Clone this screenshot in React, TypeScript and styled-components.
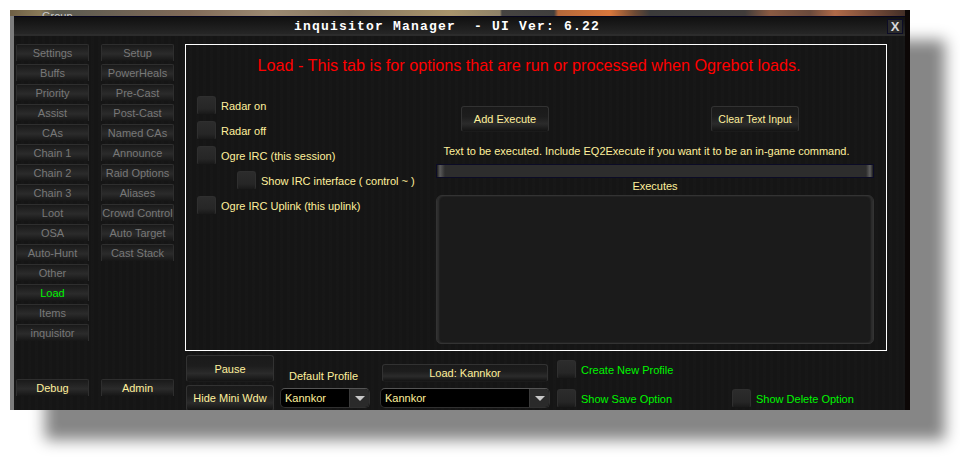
import React from 'react';
import styled, { createGlobalStyle } from 'styled-components';

const UI_FONT = '"Liberation Sans", Arial, sans-serif';
const YELLOW = '#fff09c';
const GREEN = '#00f500';

const GlobalStyle = createGlobalStyle`
    html, body {
        margin: 0;
        padding: 0;
        background: #ffffff;
    }
`;

const Page = styled.div`
    width: 960px;
    height: 460px;
    padding: 10px 0 0 10px;
    box-sizing: border-box;
    overflow: hidden;
    font-family: ${UI_FONT};
    font-size: 11px;
`;

const Window = styled.div`
    width: 900px;
    height: 400px;
    box-sizing: border-box;
    display: flex;
    flex-direction: column;
    overflow: hidden;
    background: #151515;
    box-shadow: 35px 30px 14px #868686;
    border-right: 5px solid #0c0706;
`;

const SceneStrip = styled.div`
    height: 6px;
    flex: none;
    margin-right: -5px;
    padding-left: 32px;
    overflow: hidden;
    color: #c8c8c8;
    font-size: 11px;
    line-height: 12px;
    background: linear-gradient(
        90deg,
        #6e5f45 0,
        #8a7a58 30px,
        #5a5a50 45px,
        #806a58 180px,
        #9c8a72 260px,
        #85755f 340px,
        #a8946c 440px,
        #8f8268 490px,
        #454341 492px,
        #3f3e3d 544px,
        #b5683a 548px,
        #d8773c 600px,
        #6d4a35 625px,
        #3a3a3a 640px,
        #403c3a 735px,
        #8a5a42 760px,
        #6a4a3c 800px,
        #b06a48 825px,
        #7a4d3a 860px,
        #3a2a24 900px
    );
`;

const Frame = styled.div`
    flex: 1;
    min-height: 0;
    display: flex;
    flex-direction: column;
    border-left: 4px solid #7d7d7d;
    box-shadow: inset 0 -3px 2px -1px #000000;
`;

const TitleBar = styled.div`
    height: 16px;
    flex: none;
    display: flex;
    align-items: center;
    justify-content: space-between;
    padding: 1px 2px 0 280px;
    border-top: 1px solid #05051e;
    border-bottom: 2px solid #2c2c2c;
    background: linear-gradient(180deg, #101010, #262626);
`;

const Title = styled.span`
    color: #ffffff;
    font-family: "Liberation Mono", monospace;
    font-weight: bold;
    font-size: 13px;
    letter-spacing: 1.2px;
    white-space: pre;
`;

const CloseButton = styled.span`
    width: 16px;
    height: 15px;
    display: flex;
    align-items: center;
    justify-content: center;
    color: #d8d8d8;
    font-family: "Liberation Sans", sans-serif;
    font-weight: bold;
    font-size: 13px;
    background: #2b2b2b;
    border: 1px solid #0c0c26;
    box-sizing: border-box;
`;

const Body = styled.div`
    flex: 1;
    min-height: 0;
    display: flex;
    background:
        repeating-linear-gradient(90deg, rgba(255, 255, 255, 0.008) 0 3px, transparent 3px 7px),
        #151515;
`;

const Sidebar = styled.nav`
    width: 171px;
    flex: none;
    box-sizing: border-box;
    padding: 8px 0 0 2px;
    display: flex;
    flex-direction: column;
    justify-content: space-between;
    height: 360px;
`;

const TabGrid = styled.div`
    display: grid;
    grid-template-columns: 73px 73px;
    column-gap: 12px;
    align-items: start;
`;

const TabColumn = styled.div`
    display: flex;
    flex-direction: column;
    gap: 3px;
`;

const TabButton = styled.div<{ $color?: string }>`
    height: 17px;
    box-sizing: border-box;
    display: flex;
    align-items: center;
    justify-content: center;
    white-space: nowrap;
    color: ${({ $color }) => $color || '#787878'};
    background: linear-gradient(180deg, #1a1a1a 0, #2b2b2b 55%, #161616 100%);
    border: 1px solid #2e2e2e;
    border-bottom: none;
    border-radius: 2px 2px 0 0;
`;

const Main = styled.main`
    flex: 1;
    min-width: 0;
    display: flex;
    flex-direction: column;
    padding-top: 8px;
`;

const Panel = styled.section`
    width: 702px;
    height: 307px;
    box-sizing: border-box;
    border: 1px solid #ffffff;
    display: flex;
    flex-direction: column;
`;

const PanelTitle = styled.h1`
    margin: 0;
    height: 51px;
    flex: none;
    padding: 6px 14px 0 0;
    box-sizing: border-box;
    text-align: center;
    color: #ff0000;
    font-size: 16.2px;
    font-weight: normal;
    line-height: 28px;
`;

const PanelBody = styled.div`
    flex: 1;
    min-height: 0;
    display: grid;
    grid-template-columns: 239px 438px;
    padding-left: 11px;
`;

const OptionList = styled.div`
    display: flex;
    flex-direction: column;
    gap: 6px;
`;

const OptionRow = styled.label<{ $indent?: boolean; $color?: string }>`
    display: flex;
    align-items: center;
    gap: 5px;
    height: 19px;
    white-space: nowrap;
    color: ${({ $color }) => $color || YELLOW};
    margin-left: ${({ $indent }) => ($indent ? '40px' : '0')};
`;

const CheckBox = styled.span`
    width: 19px;
    height: 19px;
    flex: none;
    box-sizing: border-box;
    border: 1px solid #2f2f2f;
    border-bottom-color: #161616;
    border-radius: 3px;
    background: linear-gradient(180deg, #2c2c2c, #262626 70%, #191919);
`;

const ExecuteColumn = styled.div`
    display: flex;
    flex-direction: column;
    align-items: stretch;
    padding-top: 10px;
`;

const ExecuteButtons = styled.div`
    height: 26px;
    display: grid;
    grid-template-columns: 88px 88px;
    column-gap: 162px;
    padding-left: 25px;
`;

const ActionButton = styled.div<{ $height?: number; $small?: boolean }>`
    height: ${({ $height }) => $height || 26}px;
    box-sizing: border-box;
    display: flex;
    align-items: center;
    justify-content: center;
    white-space: nowrap;
    color: ${YELLOW};
    font-size: ${({ $small }) => ($small ? '10.5px' : '11px')};
    background: linear-gradient(180deg, #1a1a1a 0, #1d1d1d 40%, #2b2b2b 70%, #141414 100%);
    border: 1px solid #323232;
    border-bottom-color: #1b1b1b;
    border-radius: 3px;
`;

const ExecuteHint = styled.div`
    margin-top: 11px;
    height: 16px;
    line-height: 16px;
    padding-right: 17px;
    text-align: center;
    white-space: nowrap;
    color: ${YELLOW};
`;

const ExecuteInput = styled.div`
    margin-top: 5px;
    height: 14px;
    box-sizing: border-box;
    border: 1px solid #0b0b26;
    background: linear-gradient(90deg, #1c1c1c 0, #5a5a5a 3px, #2d2d2d 8px, #2d2d2d calc(100% - 7px), #606060 calc(100% - 3px), #1c1c1c 100%);
`;

const ExecutesLabel = styled.div`
    height: 17px;
    line-height: 16px;
    text-align: center;
    color: ${YELLOW};
`;

const ExecuteList = styled.div`
    height: 149px;
    box-sizing: border-box;
    border: 1px solid #333333;
    border-radius: 6px 6px 5px 5px;
    background: #1b1b1b;
    box-shadow: inset 2px 0 2px #303030, inset -2px 0 2px #303030;
`;

const Footer = styled.footer`
    flex: 1;
    min-height: 0;
    display: flex;
    align-items: flex-start;
    padding: 4px 0 0 1px;
`;

const StackColumn = styled.div<{ $width: number; $left?: number; $top?: number }>`
    width: ${({ $width }) => $width}px;
    flex: none;
    display: flex;
    flex-direction: column;
    margin-left: ${({ $left }) => $left || 0}px;
    padding-top: ${({ $top }) => $top || 0}px;
`;

const PauseColumn = styled(StackColumn)`
    gap: 3px;
`;

const ProfileLabel = styled.div`
    height: 33px;
    box-sizing: border-box;
    padding: 13px 0 0 9px;
    line-height: 16px;
    color: ${YELLOW};
    white-space: nowrap;
`;

const LoadSlot = styled.div`
    height: 33px;
    box-sizing: border-box;
    padding: 9px 2px 0;
`;

const Select = styled.div`
    height: 20px;
    box-sizing: border-box;
    display: flex;
    align-items: center;
    justify-content: space-between;
    padding-left: 4px;
    color: ${YELLOW};
    background: #000000;
    border: 1px solid #303030;
    border-top-color: #555555;
    border-radius: 5px;
`;

const SelectArrow = styled.span`
    width: 19px;
    height: 18px;
    flex: none;
    display: flex;
    align-items: center;
    justify-content: center;
    background: #2a2a2a;
    border-left: 1px solid #3a3a3a;
    border-radius: 0 4px 4px 0;

    &::after {
        content: '';
        border-left: 5px solid transparent;
        border-right: 5px solid transparent;
        border-top: 5px solid #c8c8c8;
    }
`;

const SaveColumn = styled(StackColumn)`
    gap: 10px;
`;

const TABS_LEFT = [
    'Settings', 'Buffs', 'Priority', 'Assist', 'CAs', 'Chain 1', 'Chain 2', 'Chain 3',
    'Loot', 'OSA', 'Auto-Hunt', 'Other', 'Load', 'Items', 'inquisitor',
];

const TABS_RIGHT = [
    'Setup', 'PowerHeals', 'Pre-Cast', 'Post-Cast', 'Named CAs', 'Announce',
    'Raid Options', 'Aliases', 'Crowd Control', 'Auto Target', 'Cast Stack',
];

const OPTIONS = [
    { text: 'Radar on' },
    { text: 'Radar off' },
    { text: 'Ogre IRC (this session)' },
    { text: 'Show IRC interface ( control ~ )', indent: true },
    { text: 'Ogre IRC Uplink (this uplink)' },
];

export default function App() {
    return (
        <Page>
            <GlobalStyle />
            <Window>
                <SceneStrip>Group</SceneStrip>
                <Frame>
                    <TitleBar>
                        <Title>{'inquisitor Manager  - UI Ver: 6.22'}</Title>
                        <CloseButton>X</CloseButton>
                    </TitleBar>
                    <Body>
                        <Sidebar>
                            <TabGrid>
                                <TabColumn>
                                    {TABS_LEFT.map((tab) => (
                                        <TabButton key={tab} $color={tab === 'Load' ? GREEN : undefined}>
                                            {tab}
                                        </TabButton>
                                    ))}
                                </TabColumn>
                                <TabColumn>
                                    {TABS_RIGHT.map((tab) => (
                                        <TabButton key={tab}>{tab}</TabButton>
                                    ))}
                                </TabColumn>
                            </TabGrid>
                            <TabGrid>
                                <TabButton $color={YELLOW}>Debug</TabButton>
                                <TabButton $color={YELLOW}>Admin</TabButton>
                            </TabGrid>
                        </Sidebar>
                        <Main>
                            <Panel>
                                <PanelTitle>Load - This tab is for options that are run or processed when Ogrebot loads.</PanelTitle>
                                <PanelBody>
                                    <OptionList>
                                        {OPTIONS.map((option) => (
                                            <OptionRow key={option.text} $indent={option.indent}>
                                                <CheckBox />
                                                {option.text}
                                            </OptionRow>
                                        ))}
                                    </OptionList>
                                    <ExecuteColumn>
                                        <ExecuteButtons>
                                            <ActionButton>Add Execute</ActionButton>
                                            <ActionButton $small>Clear Text Input</ActionButton>
                                        </ExecuteButtons>
                                        <ExecuteHint>Text to be executed. Include EQ2Execute if you want it to be an in-game command.</ExecuteHint>
                                        <ExecuteInput />
                                        <ExecutesLabel>Executes</ExecutesLabel>
                                        <ExecuteList />
                                    </ExecuteColumn>
                                </PanelBody>
                            </Panel>
                            <Footer>
                                <PauseColumn $width={88}>
                                    <ActionButton $height={27}>Pause</ActionButton>
                                    <ActionButton>Hide Mini Wdw</ActionButton>
                                </PauseColumn>
                                <StackColumn $width={90} $left={6}>
                                    <ProfileLabel>Default Profile</ProfileLabel>
                                    <Select>
                                        Kannkor
                                        <SelectArrow />
                                    </Select>
                                </StackColumn>
                                <StackColumn $width={170} $left={10}>
                                    <LoadSlot>
                                        <ActionButton $height={18}>Load: Kannkor</ActionButton>
                                    </LoadSlot>
                                    <Select>
                                        Kannkor
                                        <SelectArrow />
                                    </Select>
                                </StackColumn>
                                <SaveColumn $width={175} $left={7} $top={5}>
                                    <OptionRow $color={GREEN}>
                                        <CheckBox />
                                        Create New Profile
                                    </OptionRow>
                                    <OptionRow $color={GREEN}>
                                        <CheckBox />
                                        Show Save Option
                                    </OptionRow>
                                </SaveColumn>
                                <SaveColumn $width={130} $top={34}>
                                    <OptionRow $color={GREEN}>
                                        <CheckBox />
                                        Show Delete Option
                                    </OptionRow>
                                </SaveColumn>
                            </Footer>
                        </Main>
                    </Body>
                </Frame>
            </Window>
        </Page>
    );
}
